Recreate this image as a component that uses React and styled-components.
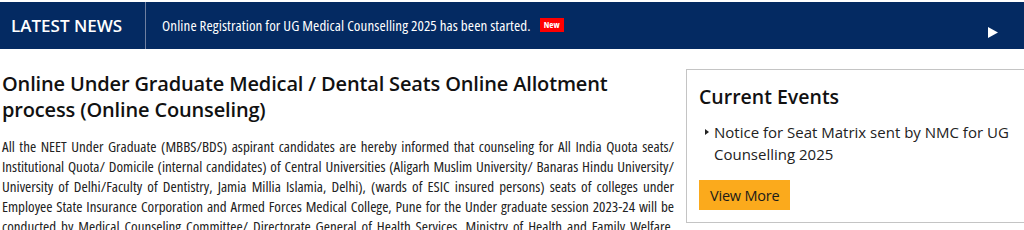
import React from 'react';
import styled, { createGlobalStyle } from 'styled-components';

const GlobalStyle = createGlobalStyle`
  html, body {
    margin: 0;
    padding: 0;
    background: #fff;
    font-family: "Open Sans", "Noto Sans", sans-serif;
    color: #111;
    overflow: hidden;
  }
`;

const NewsBar = styled.div`
  margin-top: 2px;
  height: 47px;
  background: #042a62;
  display: flex;
  align-items: center;
  color: #fff;
`;

const NewsLabel = styled.div`
  width: 146px;
  height: 100%;
  box-sizing: border-box;
  padding-left: 11px;
  display: flex;
  align-items: center;
  font-size: 17px;
  font-weight: 600;
  border-right: 1px solid #6f7fa0;
`;

const Ticker = styled.div`
  flex: 1;
  display: flex;
  align-items: center;
  padding-left: 16px;
  font-size: 15px;
  letter-spacing: 0.1px;
  font-stretch: 75%;
  margin-top: -2px;
`;

const Badge = styled.span`
  margin-left: 9px;
  background: #ff0000;
  color: #fff;
  font-size: 9px;
  font-weight: 700;
  font-stretch: 75%;
  padding: 1px 4px 2px;
  line-height: 11px;
`;

const Play = styled.svg`
  margin-right: 26px;
  margin-top: 14px;
`;

const Content = styled.div`
  display: grid;
  grid-template-columns: 672px 350px;
  column-gap: 12px;
  padding-left: 2px;
`;

const Main = styled.div``;

const Title = styled.h1`
  margin: 22px 0 0;
  font-size: 20px;
  line-height: 26px;
  font-weight: 600;
  letter-spacing: -0.15px;
  color: #111;
`;

const Body = styled.p`
  margin: 13px 0 0;
  font-size: 15px;
  font-stretch: 75%;
  line-height: 20px;
  color: #222;
`;

const Line = styled.span`
  display: block;
  text-align: justify;
  text-align-last: justify;
`;

const Panel = styled.div`
  margin-top: 20px;
  border: 1px solid #c4c4c4;
  padding: 14px 20px 11px 12px;
  height: 154px;
  box-sizing: border-box;
`;

const PanelTitle = styled.h2`
  margin: 0;
  font-size: 19.5px;
  line-height: 26px;
  font-weight: 600;
  color: #111;
`;

const EventList = styled.ul`
  list-style: none;
  margin: 11px 0 0;
  padding: 0;
`;

const EventItem = styled.li`
  position: relative;
  padding-left: 15px;
  font-size: 15px;
  line-height: 22px;
  color: #222;

  &::before {
    content: '';
    position: absolute;
    left: 6px;
    top: 8px;
    border-left: 4px solid #222;
    border-top: 3px solid transparent;
    border-bottom: 3px solid transparent;
  }
`;

const MoreButton = styled.button`
  margin-top: 15px;
  border: none;
  background: #fbaa1c;
  color: #1a1a1a;
  font-family: inherit;
  font-size: 14.5px;
  letter-spacing: -0.2px;
  padding: 0 11px;
  height: 30px;
  cursor: pointer;
`;

const lines = [
  'All the NEET Under Graduate (MBBS/BDS) aspirant candidates are hereby informed that counseling for All India Quota seats/',
  'Institutional Quota/ Domicile (internal candidates) of Central Universities (Aligarh Muslim University/ Banaras Hindu University/',
  'University of Delhi/Faculty of Dentistry, Jamia Millia Islamia, Delhi), (wards of ESIC insured persons) seats of colleges under',
  'Employee State Insurance Corporation and Armed Forces Medical College, Pune for the Under graduate session 2023-24 will be',
  'conducted by Medical Counseling Committee/ Directorate General of Health Services, Ministry of Health and Family Welfare,',
];

export default function App() {
  return (
    <>
      <GlobalStyle />
      <NewsBar>
        <NewsLabel>LATEST NEWS</NewsLabel>
        <Ticker>
          Online Registration for UG Medical Counselling 2025 has been started.
          <Badge>New</Badge>
        </Ticker>
        <Play width="10" height="11" viewBox="0 0 10 11">
          <path d="M0 0 L10 5.5 L0 11 Z" fill="#fff" />
        </Play>
      </NewsBar>
      <Content>
        <Main>
          <Title>
            Online Under Graduate Medical / Dental Seats Online Allotment
            <br />
            process (Online Counseling)
          </Title>
          <Body>
            {lines.map((l, i) => (
              <Line key={i}>{l}</Line>
            ))}
          </Body>
        </Main>
        <Panel>
          <PanelTitle>Current Events</PanelTitle>
          <EventList>
            <EventItem>Notice for Seat Matrix sent by NMC for UG Counselling 2025</EventItem>
          </EventList>
          <MoreButton>View More</MoreButton>
        </Panel>
      </Content>
    </>
  );
}
